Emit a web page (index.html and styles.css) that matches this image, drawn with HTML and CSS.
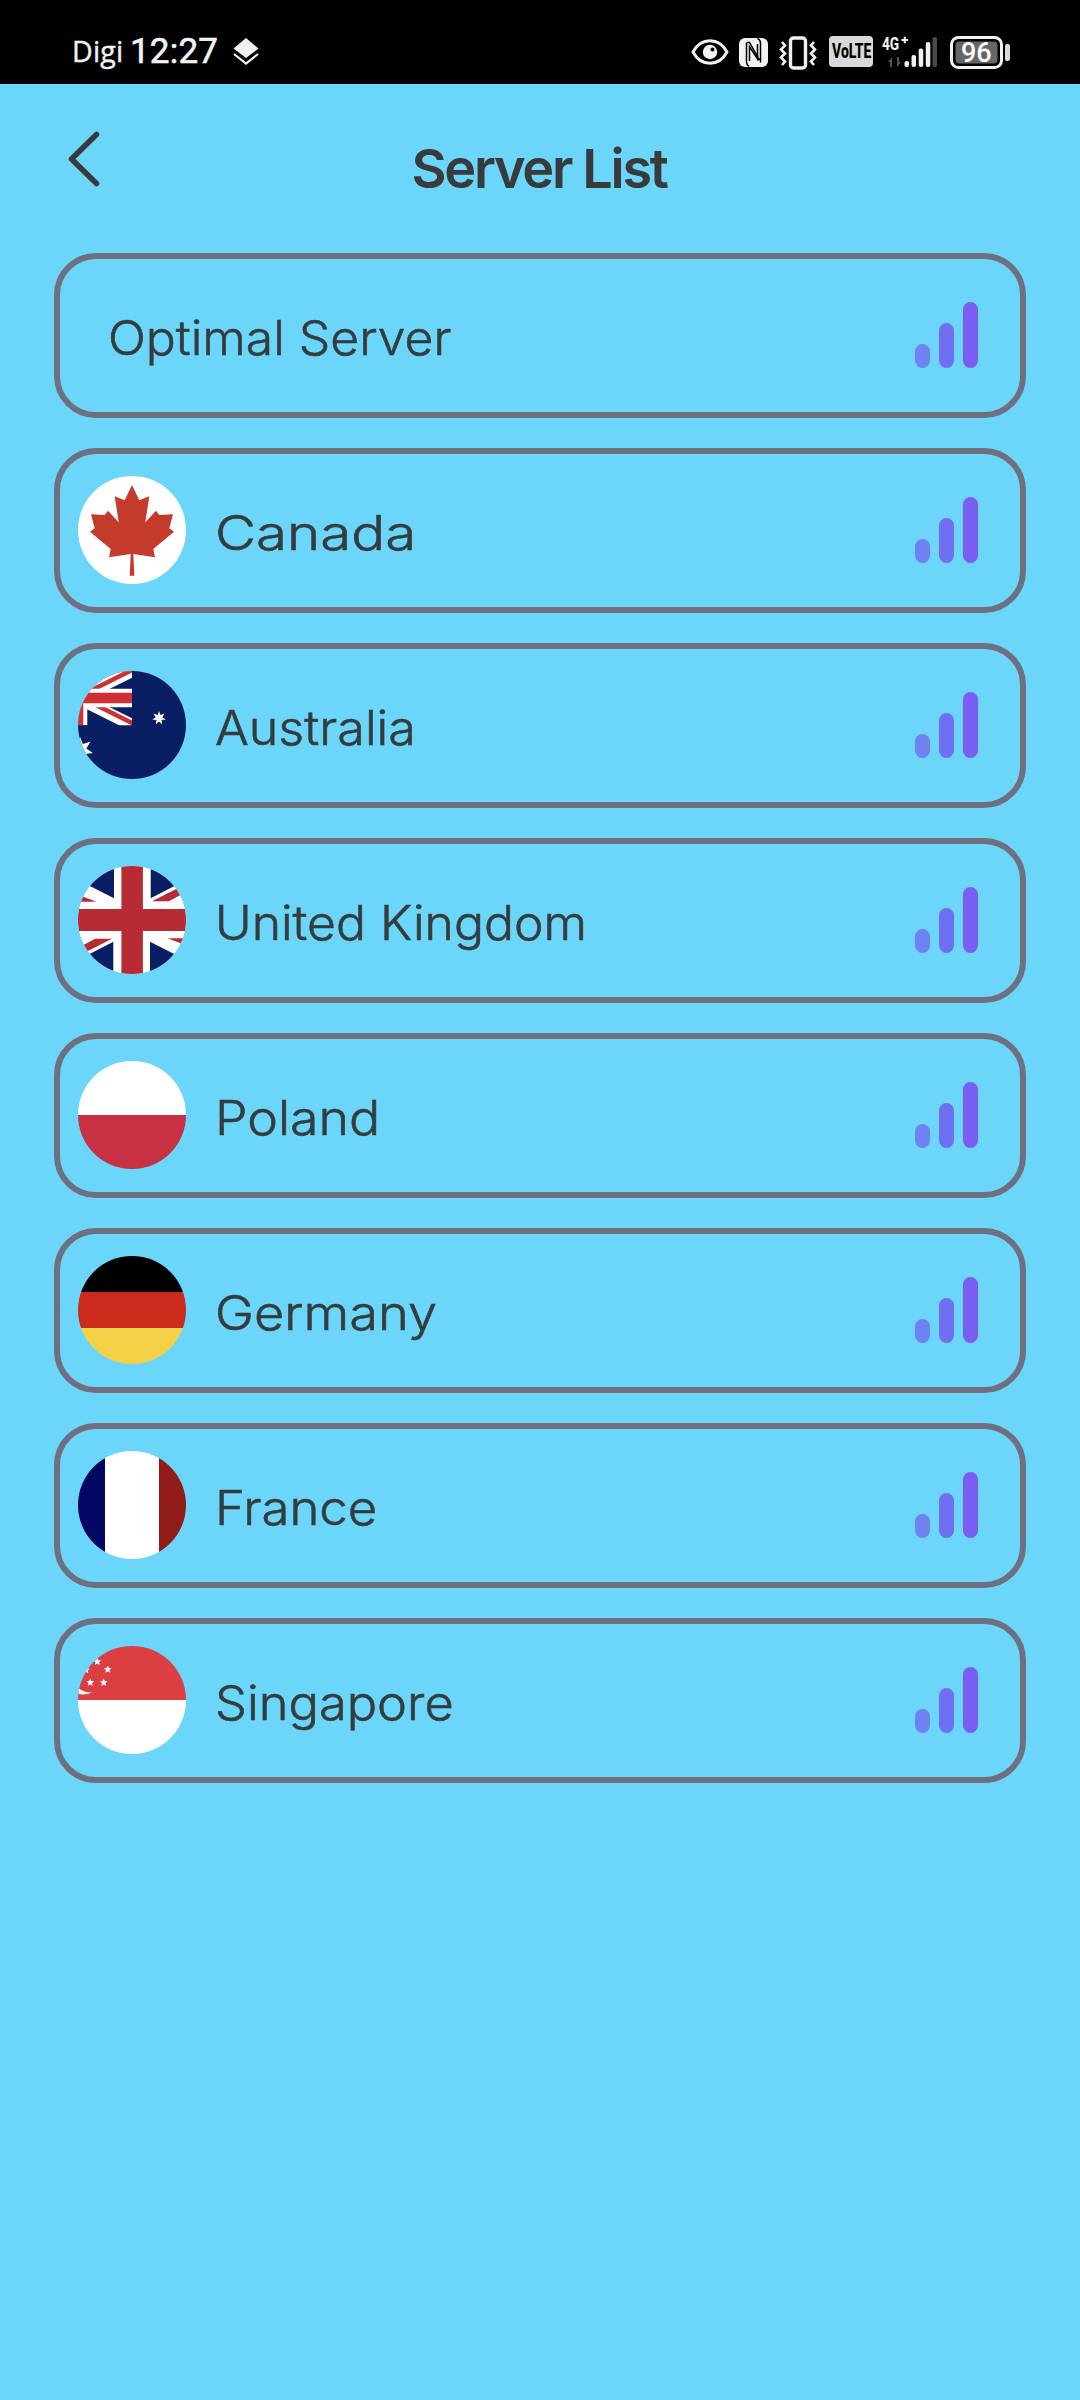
FILE: index.html
```html
<!DOCTYPE html>
<html lang="en">
<head>
<meta charset="utf-8">
<title>Server List</title>
<link rel="stylesheet" href="styles.css">
</head>
<body>
<svg class="defs" width="0" height="0" aria-hidden="true">
  <defs>
    <symbol id="signal" viewBox="0 0 63 66">
      <rect x="0" y="42" width="15" height="24" rx="7.5" fill="#7082f2"/>
      <rect x="24" y="21" width="15" height="45" rx="7.5" fill="#716ff1"/>
      <rect x="48" y="0" width="15" height="66" rx="7.5" fill="#7a5df3"/>
    </symbol>
    <polygon id="star5" points="0,-4 1.1,-1.4 3.8,-1.2 1.8,.6 2.4,3.3 0,1.9 -2.4,3.3 -1.8,.6 -3.8,-1.2 -1.1,-1.4" fill="#fff"/>
    <polygon id="star7" points="0,-7 1.5,-3.1 5.5,-4.4 3.3,-.8 6.8,1.6 2.7,2.1 3,6.3 0,3.4 -3,6.3 -2.7,2.1 -6.8,1.6 -3.3,-.8 -5.5,-4.4 -1.5,-3.1" fill="#fff"/>
  </defs>
</svg>

<header class="status">
  <span class="carrier">Digi</span>
  <span class="clock">12:27</span>
  <svg class="layers" width="26" height="28" viewBox="0 0 26 28"><path d="M13 0 25.500 10.500 13 20 .5 10.500Z" fill="#f2f2f2"/><path d="M1 16 13 25.500 25 16" fill="none" stroke="#f2f2f2" stroke-width="2.200"/></svg>
  <div class="indicators">
    <svg width="38" height="26" viewBox="0 0 38 26"><path d="M2 13C10-2 28-2 36 13C28 28 10 28 2 13Z" fill="none" stroke="#f2f2f2" stroke-width="3"/><circle cx="19" cy="13" r="7.200" fill="#f2f2f2"/><circle cx="21.500" cy="10.500" r="2" fill="#000"/></svg>
    <svg class="nfc" width="29" height="29" viewBox="0 0 29 29"><rect width="29" height="29" rx="6" fill="#f2f2f2"/><path d="M7.500 4.500V24Q7.500 26.500 10 28.500M10.500 23V8.500L19.500 22.500M8 4.500H10.500L20.500 22M21.500 24.500V5Q21.500 2 18.500 .5M18.500 6V20" fill="none" stroke="#000" stroke-width="1.500"/></svg>
    <svg class="vibrate" width="38" height="34" viewBox="0 0 38 34" fill="none" stroke="#f2f2f2"><rect x="11.500" y="2" width="15" height="30" rx="3" stroke-width="3.400"/><path d="M3 6 6 9.500 2 13.500 6 17.500 2 21.500 6 25.500 3 29M35 6 32 9.500 36 13.500 32 17.500 36 21.500 32 25.500 35 29" stroke-width="2.600"/></svg>
    <svg class="volte" width="44" height="31" viewBox="0 0 44 31"><rect width="44" height="31" rx="4" fill="#d9d9d9"/><text transform="translate(3 22) scale(.7 1)" font-size="20" class="badge">VoLTE</text></svg>
    <svg class="cell" width="56" height="32" viewBox="0 0 56 32"><text transform="translate(0 14) scale(.74 1)" font-size="18.500" class="net">4G</text><path d="M19.500 4H26M22.750 .8V7.200" stroke="#f2f2f2" stroke-width="2"/><path d="M6 26 10 21V31H8V26ZM19 26 15 31V21H17V26Z" fill="#555"/><g fill="#f2f2f2"><rect x="22.500" y="25" width="4.500" height="6" rx="2"/><rect x="29.500" y="19" width="4.500" height="12" rx="2"/><rect x="36.700" y="12.500" width="4.500" height="18.500" rx="2"/><rect x="43.800" y="6" width="4.500" height="25" rx="2"/></g><rect x="50.500" y="1" width="4.500" height="30" rx="2" fill="#4a4a4a"/></svg>
    <svg class="battery" width="60" height="33" viewBox="0 0 60 33"><rect x="1.500" y="1.500" width="50" height="30" rx="7" fill="none" stroke="#f2f2f2" stroke-width="3"/><rect x="5.500" y="5.500" width="42" height="22" rx="4" fill="#666"/><rect x="55" y="8" width="5" height="17" rx="2" fill="#d9d9d9"/><text x="11" y="26" font-size="27" class="pct">96</text></svg>
  </div>
</header>

<nav class="titlebar">
  <svg class="back" width="30" height="54" viewBox="0 0 30 54"><path d="M27.500 2.500 2.500 27 27.500 51.500" fill="none" stroke="#383a3b" stroke-width="5.500" stroke-linecap="round" stroke-linejoin="round"/></svg>
  <h1>Server List</h1>
</nav>

<main class="list">
  <div class="card plain"><span class="name optimal">Optimal Server</span><svg class="bars"><use href="#signal"/></svg></div>

  <div class="card">
    <svg class="flag" viewBox="0 0 108 108"><rect width="108" height="108" fill="#fff"/><path d="M54 9 61.300 24.300 71.300 20.300 67.300 46.300 78 34.700 81.300 39 95 38.300 91.300 52.300 96 55.700 75.300 73 77 81.300 55.300 78 56.300 99.700H51.700L52.700 78 31 81.300 32.700 73 12 55.700 16.700 52.300 13 38.300 26.700 39 30 34.700 40.700 46.300 36.700 20.300 46.700 24.300Z" fill="#c43a2b"/></svg>
    <span class="name canada">Canada</span><svg class="bars"><use href="#signal"/></svg></div>

  <div class="card">
    <svg class="flag" viewBox="0 0 108 108"><rect width="108" height="108" fill="#0a1f63"/>
      <svg width="54" height="54.300" viewBox="0 0 54 54.300"><path d="M0 27 54 0M0 27 54 54" stroke="#fff" stroke-width="12"/><path d="M0 26 54 -1M0 25 60 55" stroke="#d03033" stroke-width="4.500"/><path d="M0 27H54M0 0V54.300" stroke="#fff" stroke-width="18.600"/><path d="M0 27H54" stroke="#d03033" stroke-width="10.500"/><path d="M0 0V54.300" stroke="#d03033" stroke-width="10.500"/></svg>
      <use href="#star7" transform="translate(81 47)"/><use href="#star7" transform="translate(2 79) scale(1.9)"/></svg>
    <span class="name australia">Australia</span><svg class="bars"><use href="#signal"/></svg></div>

  <div class="card">
    <svg class="flag" viewBox="0 0 108 108"><rect width="108" height="108" fill="#fff"/>
      <g id="uk-half"><path d="M-6 11V0H36V32.300ZM72.700 32.300V0H108V14Z" fill="#0a1f63"/><path d="M-4 27 18 35.700H-4ZM74 35.300 108 18V26L91 35.300Z" fill="#b72b34"/></g>
      <use href="#uk-half" transform="rotate(180 54 54)"/>
      <path d="M43.400 0H64.900V43H108V65H64.900V108H43.400V65H0V43H43.400Z" fill="#b72b34"/></svg>
    <span class="name uk">United Kingdom</span><svg class="bars"><use href="#signal"/></svg></div>

  <div class="card">
    <svg class="flag" viewBox="0 0 108 108"><rect width="108" height="54" fill="#fff"/><rect y="54" width="108" height="54" fill="#c83143"/></svg>
    <span class="name poland">Poland</span><svg class="bars"><use href="#signal"/></svg></div>

  <div class="card">
    <svg class="flag" viewBox="0 0 108 108"><rect width="108" height="36" fill="#000"/><rect y="36" width="108" height="36" fill="#ca2b1d"/><rect y="72" width="108" height="36" fill="#f5d147"/></svg>
    <span class="name germany">Germany</span><svg class="bars"><use href="#signal"/></svg></div>

  <div class="card">
    <svg class="flag" viewBox="0 0 108 108"><rect width="27" height="108" fill="#020561"/><rect x="27" width="54" height="108" fill="#fff"/><rect x="81" width="27" height="108" fill="#911c17"/></svg>
    <span class="name france">France</span><svg class="bars"><use href="#signal"/></svg></div>

  <div class="card">
    <svg class="flag" viewBox="0 0 108 108"><rect width="108" height="54" fill="#db3f42"/><rect y="54" width="108" height="54" fill="#fff"/><use href="#star5" x="19.300" y="15.700"/><use href="#star5" x="29.700" y="23.500"/><use href="#star5" x="25.700" y="36.500"/><use href="#star5" x="12.300" y="36.500"/><use href="#star5" x="8" y="24"/><path d="M-1 41Q4 46 14 46.500Q6 50 -2 47Z" fill="#fff"/></svg>
    <span class="name singapore">Singapore</span><svg class="bars"><use href="#signal"/></svg></div>
</main>
</body>
</html>
```
FILE: styles.css
```css
* { box-sizing: border-box; }
body {
  margin: 0;
  min-height: 2400px;
  background: #6bd6f9;
  color: #343c3e;
  font-family: Inter, "Liberation Sans", sans-serif;
}
svg { display: block; flex: none; overflow: visible; }
svg svg, .flag { overflow: hidden; }
.defs { position: absolute; }

.status {
  height: 84px;
  padding: 0 70px 0 72px;
  display: flex;
  align-items: flex-start;
  background: #000;
  color: #f2f2f2;
  font-family: "Open Sans", Roboto, sans-serif;
  white-space: nowrap;
}
.carrier { width: 58px; padding-top: 31px; font-size: 28.500px; line-height: 40px; font-weight: 500; letter-spacing: 0.2px; -webkit-text-stroke: 0.4px #f2f2f2; }
.clock { width: 103px; padding-top: 32px; font: 400 35px/40px Roboto, sans-serif; letter-spacing: 0.2px; -webkit-text-stroke: 0.6px #f2f2f2; }
.layers { margin-top: 38px; }
.indicators { margin-left: auto; padding-top: 36px; display: flex; align-items: flex-start; }
.indicators > svg:first-child { margin-top: 3px; }
.nfc { margin: 2px 0 0 10px; }
.vibrate { margin-left: 11px; }
.volte { margin-left: 12px; }
.cell { margin-left: 9px; }
.battery { margin-left: 12px; }
.badge { font-family: Roboto, sans-serif; font-weight: 800; fill: #000; }
.net { font-family: Roboto, sans-serif; font-weight: 700; fill: #f2f2f2; }
.pct { font-family: Roboto, sans-serif; font-weight: 500; fill: #fff; }

.titlebar {
  height: 169px;
  padding: 48px 69px 0;
  display: grid;
  grid-template-columns: 30px 1fr 30px;
  align-items: start;
}
h1 {
  margin: 7px 2px 0 0;
  font-size: 54px;
  line-height: 60px;
  font-weight: 600;
  letter-spacing: -2.3px;
  text-align: center;
  white-space: nowrap;
  color: #383a3b;
}

.list { padding: 0 54px; display: flex; flex-direction: column; gap: 30px; }
.card {
  height: 165px;
  padding: 0 42px 0 18px;
  border: 6px solid #6e7080;
  border-radius: 42px;
  display: flex;
  align-items: center;
}
.plain { padding-left: 48px; }
.flag { width: 108px; height: 108px; margin: -1px 29px 0 0; border-radius: 50%; }
.name {
  padding-top: 4px;
  font-size: 48px;
  line-height: 60px;
  font-weight: 300;
  white-space: nowrap;
  transform-origin: left center;
  -webkit-text-stroke: 0.6px #343c3e;
}
.optimal { transform: scaleX(1.038); }
.canada { transform: scaleX(1.175); }
.australia { transform: scaleX(1.046); }
.uk { transform: scaleX(1.038); }
.poland { transform: scaleX(1.08); }
.germany { transform: scaleX(1.09); }
.france { transform: scaleX(1.06); }
.singapore { transform: scaleX(1.053); }
.bars { width: 63px; height: 66px; margin-left: auto; margin-top: -1px; }
```
